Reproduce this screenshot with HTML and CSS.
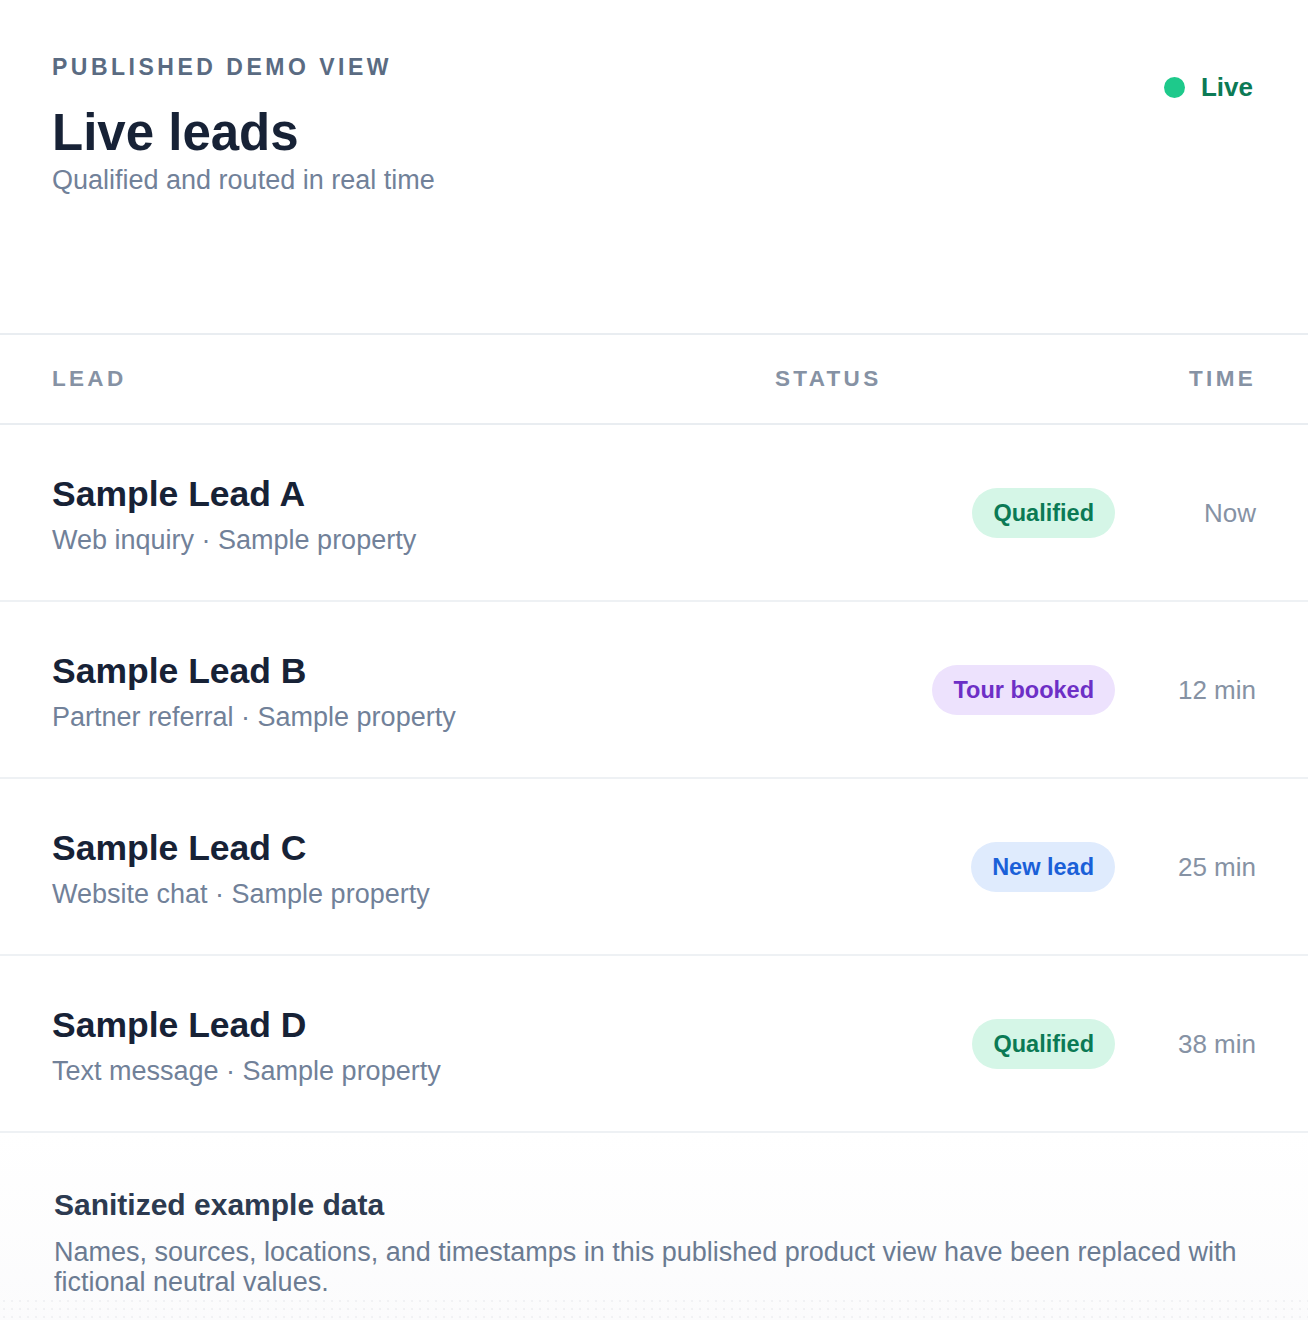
FILE: index.html
```html
<!DOCTYPE html>
<html lang="en">
<head>
<meta charset="utf-8">
<title>Live leads</title>
<link rel="stylesheet" href="styles.css">
</head>
<body>
<div class="page">
  <header class="hero">
    <div class="hero-text">
      <div class="eyebrow">PUBLISHED DEMO VIEW</div>
      <h1 class="title">Live leads</h1>
      <div class="subtitle">Qualified and routed in real time</div>
    </div>
    <div class="live"><span class="live-dot"></span><span class="live-label">Live</span></div>
  </header>

  <section class="table">
    <div class="row head">
      <div class="th">LEAD</div>
      <div class="th">STATUS</div>
      <div class="th th-time">TIME</div>
    </div>
    <div class="row">
      <div class="lead">
        <div class="lead-name">Sample Lead A</div>
        <div class="lead-meta">Web inquiry · Sample property</div>
      </div>
      <div class="status"><span class="badge badge-green">Qualified</span></div>
      <div class="time">Now</div>
    </div>
    <div class="row">
      <div class="lead">
        <div class="lead-name">Sample Lead B</div>
        <div class="lead-meta">Partner referral · Sample property</div>
      </div>
      <div class="status"><span class="badge badge-purple">Tour booked</span></div>
      <div class="time">12 min</div>
    </div>
    <div class="row">
      <div class="lead">
        <div class="lead-name">Sample Lead C</div>
        <div class="lead-meta">Website chat · Sample property</div>
      </div>
      <div class="status"><span class="badge badge-blue">New lead</span></div>
      <div class="time">25 min</div>
    </div>
    <div class="row">
      <div class="lead">
        <div class="lead-name">Sample Lead D</div>
        <div class="lead-meta">Text message · Sample property</div>
      </div>
      <div class="status"><span class="badge badge-green">Qualified</span></div>
      <div class="time">38 min</div>
    </div>
  </section>

  <footer class="note">
    <div class="note-title">Sanitized example data</div>
    <p class="note-body">Names, sources, locations, and timestamps in this published product view have been replaced with fictional neutral values.</p>
  </footer>
</div>
</body>
</html>
```

FILE: styles.css
```css
* { box-sizing: border-box; }
html, body { margin: 0; padding: 0; background: #ffffff; }
body {
  font-family: "Liberation Sans", Arial, Helvetica, sans-serif;
  color: #172236;
}
.page { width: 1308px; min-height: 1320px; display: flex; flex-direction: column; }

.hero {
  display: flex;
  justify-content: space-between;
  align-items: flex-start;
  padding: 53px 55px 0 52px;
  height: 335px;
  border-bottom: 2px solid #e9edf1;
}
.eyebrow {
  font-size: 23px;
  line-height: 28px;
  font-weight: 700;
  letter-spacing: 3.5px;
  color: #5a6b82;
}
.title {
  margin: 22px 0 0;
  font-size: 51px;
  line-height: 60px;
  font-weight: 700;
  color: #172236;
}
.subtitle {
  margin-top: 1px;
  font-size: 27px;
  line-height: 32px;
  color: #718199;
}
.live {
  display: flex;
  align-items: center;
  gap: 16px;
  margin-top: 18px;
}
.live-dot {
  width: 21px; height: 21px; border-radius: 50%;
  background: #1ec98b;
}
.live-label {
  font-size: 26px;
  line-height: 32px;
  font-weight: 700;
  color: #0c7a55;
}

.table { display: flex; flex-direction: column; }
.row {
  display: grid;
  grid-template-columns: 1fr 340px 141px;
  align-items: center;
  padding: 0 52px;
  height: 177px;
  border-bottom: 2px solid #eef1f4;
}
.row.head {
  height: 90px;
  padding-top: 0;
  border-bottom: 2px solid #e9edf1;
}
.th {
  font-size: 22.5px;
  line-height: 28px;
  font-weight: 700;
  letter-spacing: 3.3px;
  color: #8692a4;
}
.th-time { text-align: right; }

.lead { display: flex; flex-direction: column; padding-top: 6px; }
.lead-name {
  font-size: 35.5px;
  line-height: 42px;
  font-weight: 700;
  color: #172236;
}
.lead-meta {
  margin-top: 7px;
  font-size: 27px;
  line-height: 36px;
  color: #718199;
}
.status { display: flex; justify-content: flex-end; }
.badge {
  display: inline-block;
  font-size: 23.5px;
  line-height: 26px;
  font-weight: 700;
  padding: 12px 21px;
  border-radius: 26px;
}
.badge-green { background: #d5f6e7; color: #0b7a55; }
.badge-purple { background: #ede2fd; color: #6d2fc6; }
.badge-blue { background: #dfebfd; color: #1a60d8; }
.time {
  text-align: right;
  font-size: 26px;
  line-height: 32px;
  color: #8692a4;
}

.note {
  flex: 1;
  display: flex;
  flex-direction: column;
  padding: 54px 54px 0 54px;
  background: linear-gradient(#ffffff, #fbfbfc);
}
.note::after {
  content: "";
  display: block;
  margin: auto -54px 0;
  height: 28px;
  background-image: radial-gradient(circle, rgba(120,130,150,0.08) 1px, transparent 1.3px);
  background-size: 8px 8px;
}
.note-title {
  font-size: 30px;
  line-height: 36px;
  font-weight: 700;
  color: #2c3a50;
}
.note-body {
  margin: 14px 0 0;
  font-size: 27px;
  line-height: 30px;
  color: #6b7b92;
}
```
